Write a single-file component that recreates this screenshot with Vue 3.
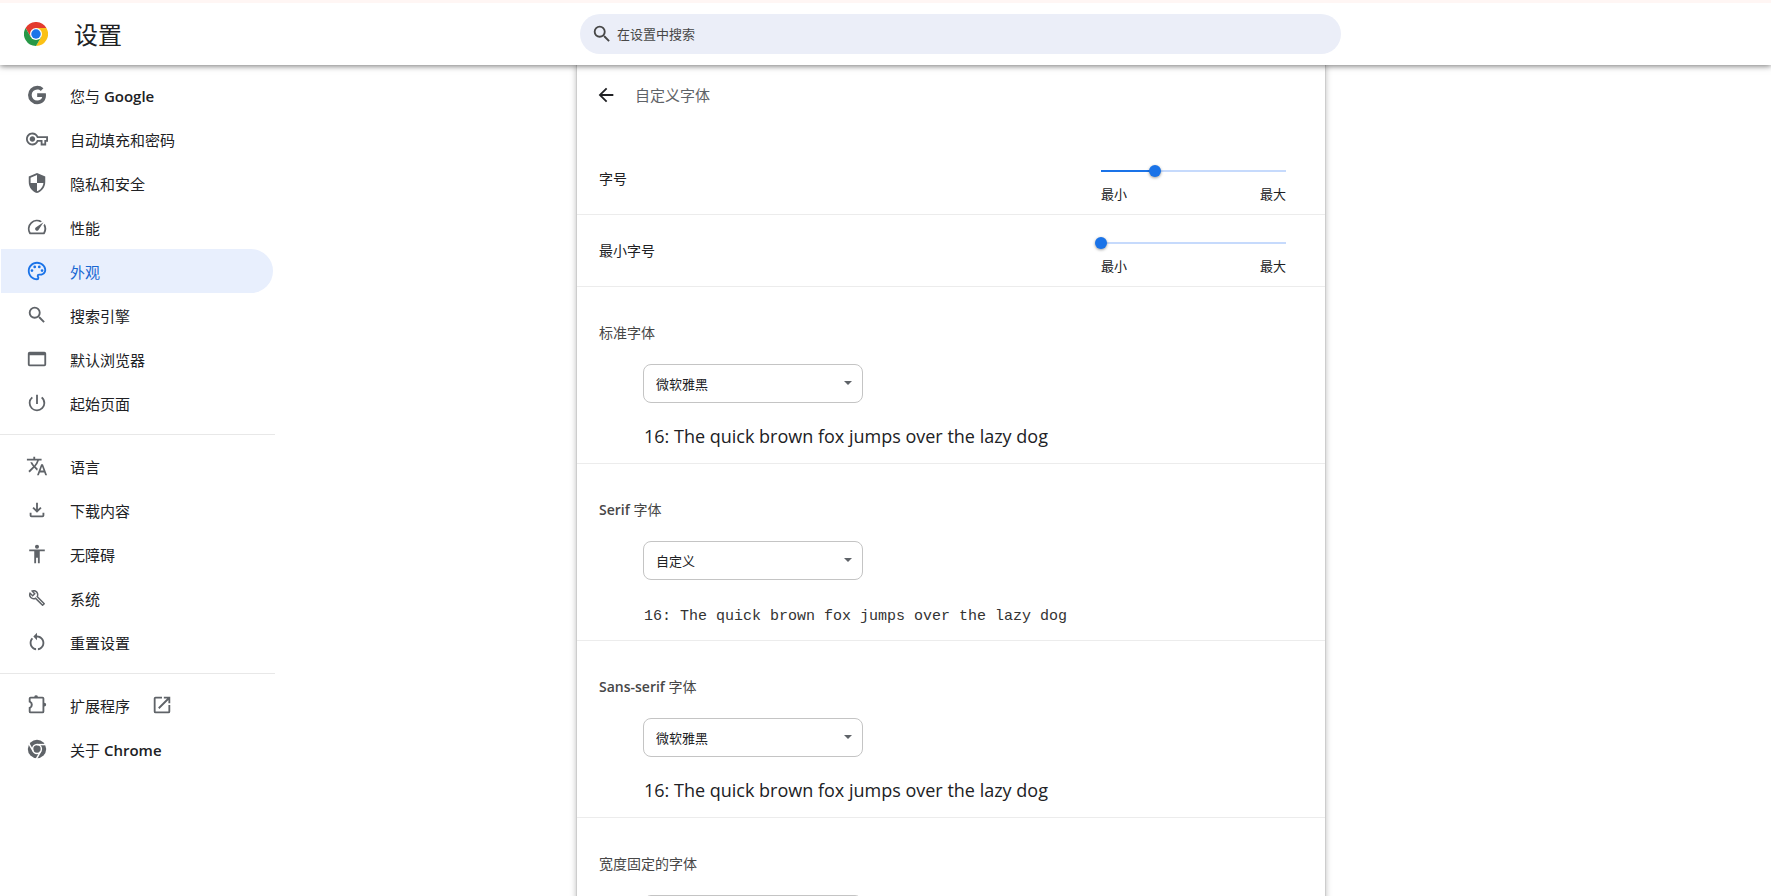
<script setup>
import { ref } from 'vue'

// Labels are lists of runs; Latin runs are drawn in semibold.
const groups = [
  [
    { label: ['您与 ', 'Google'], icon: 'google' },
    { label: ['自动填充和密码'], icon: 'key' },
    { label: ['隐私和安全'], icon: 'shield' },
    { label: ['性能'], icon: 'speed' },
    { label: ['外观'], icon: 'palette', active: true },
    { label: ['搜索引擎'], icon: 'search' },
    { label: ['默认浏览器'], icon: 'browser' },
    { label: ['起始页面'], icon: 'power' },
  ],
  [
    { label: ['语言'], icon: 'translate' },
    { label: ['下载内容'], icon: 'download' },
    { label: ['无障碍'], icon: 'accessibility' },
    { label: ['系统'], icon: 'wrench', box: '-3 -3 30 30' },
    { label: ['重置设置'], icon: 'reset' },
  ],
  [
    { label: ['扩展程序'], icon: 'extension', box: '-1 1 24 24', external: true },
    { label: ['关于 ', 'Chrome'], icon: 'chrome' },
  ],
]

const icons = {
  google: 'M12.2 10.2v3.9h5.5c-.5 2.3-2.4 3.9-5.5 3.9a6 6 0 1 1 0-12c1.5 0 2.9.5 3.9 1.5l2.9-2.9A9.9 9.9 0 0 0 12.2 2a10 10 0 1 0 0 20c5.8 0 9.6-4.1 9.6-9.8 0-.7-.1-1.400-.2-2z',
  key: 'M22 19h-6v-4h-2.680c-1.140 2.420-3.600 4-6.320 4-3.860 0-7-3.140-7-7s3.140-7 7-7c2.720 0 5.170 1.580 6.320 4H24v6h-2v4zm-4-2h2v-4h2v-2H11.940l-.23-.67C11.010 8.340 9.110 7 7 7c-2.760 0-5 2.240-5 5s2.240 5 5 5c2.110 0 4.010-1.340 4.710-3.330l.23-.67H18v4zM7 15c-1.650 0-3-1.350-3-3s1.350-3 3-3 3 1.350 3 3-1.350 3-3 3z',
  shield: 'M12 1 3 5v6c0 5.550 3.840 10.740 9 12 5.160-1.260 9-6.450 9-12V5l-9-4zm0 10.990h7c-.53 4.120-3.280 7.790-7 8.940V12H5V6.300l7-3.110v8.800z',
  speed: 'm20.380 8.570-1.230 1.850a8 8 0 0 1-.22 7.580H5.070A8 8 0 0 1 15.580 6.850l1.850-1.230A10 10 0 0 0 3.350 19a2 2 0 0 0 1.720 1h13.850a2 2 0 0 0 1.740-1 10 10 0 0 0-.27-10.440zm-9.790 6.840a2 2 0 0 0 2.830 0l5.660-8.490-8.490 5.660a2 2 0 0 0 0 2.830z',
  palette: 'M12 22C6.490 22 2 17.510 2 12S6.490 2 12 2s10 4.040 10 9c0 3.310-2.690 6-6 6h-1.770c-.28 0-.5.22-.5.5 0 .12.05.23.13.33.41.47.64 1.060.64 1.670A2.500 2.500 0 0 1 12 22zm0-18c-4.410 0-8 3.590-8 8s3.590 8 8 8c.28 0 .5-.22.5-.5a.54.54 0 0 0-.14-.35c-.41-.46-.63-1.050-.63-1.650a2.500 2.500 0 0 1 2.500-2.500H16c2.210 0 4-1.790 4-4 0-3.860-3.590-7-8-7zM6.500 10a1.500 1.500 0 1 0 0 3 1.500 1.500 0 0 0 0-3zm3-4a1.500 1.500 0 1 0 0 3 1.500 1.500 0 0 0 0-3zm5 0a1.500 1.500 0 1 0 0 3 1.500 1.500 0 0 0 0-3zm3 4a1.500 1.500 0 1 0 0 3 1.500 1.500 0 0 0 0-3z',
  search: 'M15.500 14h-.79l-.28-.27A6.471 6.471 0 0 0 16 9.500 6.500 6.500 0 1 0 9.500 16c1.610 0 3.090-.59 4.230-1.570l.27.28v.79l5 4.990L20.490 19l-4.990-5zm-6 0C7.010 14 5 11.990 5 9.500S7.010 5 9.500 5 14 7.010 14 9.500 11.990 14 9.500 14z',
  browser: 'M20 4H4a2 2 0 0 0-2 2v12a2 2 0 0 0 2 2h16a2 2 0 0 0 2-2V6a2 2 0 0 0-2-2zm0 14H4V8h16v10z',
  power: 'M13 3h-2v10h2V3zm4.830 2.170-1.420 1.420A6.920 6.920 0 0 1 19 12c0 3.870-3.130 7-7 7A6.995 6.995 0 0 1 7.580 6.580L6.170 5.170A8.932 8.932 0 0 0 3 12a9 9 0 0 0 18 0c0-2.740-1.230-5.180-3.170-6.830z',
  translate: 'm12.870 15.070-2.540-2.510.03-.03A17.520 17.520 0 0 0 14.070 6H17V4h-7V2H8v2H1v1.990h11.170C11.500 7.920 10.440 9.750 9 11.350 8.070 10.320 7.300 9.190 6.690 8h-2c.73 1.630 1.730 3.170 2.980 4.560l-5.090 5.020L4 19l5-5 3.110 3.110.76-2.040zM18.500 10h-2L12 22h2l1.120-3h4.750L21 22h2l-4.500-12zm-2.620 7 1.620-4.330L19.120 17h-3.240z',
  download: 'M11 4h2v7.200l2.600-2.600L17 10l-5 5-5-5 1.400-1.400 2.600 2.600V4zM4 15h2v3h12v-3h2v3a2 2 0 0 1-2 2H6a2 2 0 0 1-2-2v-3z',
  accessibility: 'M12 2a2.200 2.200 0 1 1 0 4.400A2.200 2.200 0 0 1 12 2zm8.500 7H15v13h-2v-6h-2v6H9V9H3.500V7h17v2z',
  wrench: 'M22.610 18.990l-9.080-9.080c.93-2.340.45-5.100-1.440-7C9.790.61 6.210.4 3.660 2.260L7.500 6.110 6.080 7.520 2.250 3.690C.39 6.230.6 9.820 2.900 12.110c1.860 1.860 4.570 2.350 6.890 1.480l9.110 9.110c.39.39 1.020.39 1.410 0l2.300-2.300c.4-.38.4-1.010 0-1.410zm-3 1.600l-9.460-9.460c-.61.45-1.290.72-2 .82-1.360.2-2.790-.21-3.830-1.250C3.370 9.760 2.930 8.500 3 7.260l3.090 3.090 4.240-4.240-3.090-3.090c1.240-.07 2.490.37 3.440 1.310 1.080 1.080 1.490 2.570 1.240 3.960-.12.71-.42 1.370-.88 1.960l9.450 9.450-.88.89z',
  reset: 'M12 5V2L8 6l4 4V7c3.310 0 6 2.690 6 6 0 2.970-2.170 5.430-5 5.910v2.020c3.950-.49 7-3.850 7-7.930 0-4.420-3.580-8-8-8zm-6 8c0-1.650.67-3.150 1.760-4.240L6.340 7.340C4.900 8.790 4 10.790 4 13c0 4.080 3.050 7.440 7 7.930v-2.020c-2.830-.48-5-2.940-5-5.910z',
  extension: 'M10 2.500a2 2 0 0 1 2 1.500h5a2 2 0 0 1 2 2v4.500a2 2 0 0 1 0 4V20a2 2 0 0 1-2 2H4a2 2 0 0 1-2-2v-4.500a2.800 2.800 0 0 0 0-5.500V6a2 2 0 0 1 2-2h4a2 2 0 0 1 2-1.500zM4 6v2.600a4.700 4.700 0 0 1 0 8.200V20h13V6H4z',
}

const sliders = ref([
  { id: 'font-size', label: '字号', value: 7, max: 24 },
  { id: 'min-font-size', label: '最小字号', value: 0, max: 24 },
])

const fonts = ref([
  { id: 'standard', label: ['标准字体'], value: '微软雅黑', sample: 'sans' },
  { id: 'serif', label: ['', 'Serif', ' 字体'], value: '自定义', sample: 'mono' },
  { id: 'sans-serif', label: ['', 'Sans-serif', ' 字体'], value: '微软雅黑', sample: 'sans' },
  { id: 'fixed', label: ['宽度固定的字体'], value: '自定义', sample: 'mono' },
])
const fontOptions = ['微软雅黑', '自定义']
</script>

<template>
  <div class="page">
    <header class="toolbar">
      <div class="brand">
        <svg class="logo" viewBox="0 0 48 48" aria-hidden="true">
          <path fill="#e33b2e" d="M3.200 12A24 24 0 0 1 44.800 12L24 13 13.600 30z" />
          <path fill="#fbc116" d="M44.800 12A24 24 0 0 1 24 48L34.400 30 24 12z" />
          <path fill="#279847" d="M24 48A24 24 0 0 1 3.200 12L13.600 30 34.400 30z" />
          <circle cx="24" cy="24" r="12" fill="#fff" />
          <circle cx="24" cy="24" r="9.500" fill="#1a73e8" />
        </svg>
        <h1>设置</h1>
      </div>
      <label class="search">
        <svg viewBox="0 0 24 24" aria-hidden="true"><path :d="icons.search" /></svg>
        <input type="search" placeholder="在设置中搜索" aria-label="在设置中搜索" />
      </label>
    </header>

    <div class="body">
      <nav class="sidebar">
        <ul v-for="(group, i) in groups" :key="i">
          <li v-for="item in group" :key="item.icon">
            <a href="#" :class="{ active: item.active }">
              <svg v-if="item.icon === 'chrome'" viewBox="0 0 24 24" aria-hidden="true">
                <circle cx="12" cy="12" r="10" />
                <g fill="none" stroke="#fff" stroke-width="1.600">
                  <circle cx="12" cy="12" r="4.800" />
                  <path d="M12 7.200h11" />
                  <path d="M12 7.200h11" transform="rotate(120 12 12)" />
                  <path d="M12 7.200h11" transform="rotate(240 12 12)" />
                </g>
              </svg>
              <svg v-else :viewBox="item.box || '0 0 24 24'" aria-hidden="true">
                <path fill-rule="evenodd" :d="icons[item.icon]" />
              </svg>
              <span>{{ item.label[0] }}<b v-if="item.label[1]">{{ item.label[1] }}</b></span>
              <svg v-if="item.external" class="external" viewBox="0 0 24 24" aria-hidden="true">
                <path d="M19 19H5V5h7V3H5a2 2 0 0 0-2 2v14a2 2 0 0 0 2 2h14a2 2 0 0 0 2-2v-7h-2v7zM14 3v2h3.590l-9.830 9.830 1.410 1.410L19 6.410V10h2V3h-7z" />
              </svg>
            </a>
          </li>
        </ul>
      </nav>

      <main class="card">
        <div class="subhead">
          <button type="button" aria-label="返回">
            <svg viewBox="0 0 24 24" aria-hidden="true"><path d="M20 11H7.830l5.590-5.590L12 4l-8 8 8 8 1.410-1.410L7.830 13H20v-2z" /></svg>
          </button>
          <h2>自定义字体</h2>
        </div>

        <div v-for="s in sliders" :key="s.id" class="slider-row">
          <label :for="s.id">{{ s.label }}</label>
          <div class="slider">
            <input
              :id="s.id"
              v-model.number="s.value"
              type="range"
              min="0"
              :max="s.max"
              :style="{ '--fill': (s.value / s.max) * 100 + '%' }"
            />
            <div class="legend"><span>最小</span><span>最大</span></div>
          </div>
        </div>

        <section v-for="f in fonts" :key="f.id" class="font">
          <label :for="f.id">{{ f.label[0] }}<b v-if="f.label[1]">{{ f.label[1] }}</b>{{ f.label[2] }}</label>
          <div class="select">
            <select :id="f.id" v-model="f.value">
              <option v-for="o in fontOptions" :key="o">{{ o }}</option>
            </select>
            <svg viewBox="0 0 8 4" aria-hidden="true"><path d="M0 0h8L4 4z" /></svg>
          </div>
          <p :class="f.sample">16: The quick brown fox jumps over the lazy dog</p>
        </section>
      </main>
    </div>
  </div>
</template>

<style>
body {
  background: #fff;
}
</style>

<style scoped>
.page {
  display: flex;
  flex-direction: column;
  height: 100vh;
  overflow: hidden;
  color: #202124;
  font-family: "Open Sans", "Noto Sans CJK SC", sans-serif;
  font-size: 15px;
}
h1,
h2,
p,
ul {
  margin: 0;
  padding: 0;
  font-weight: 400;
}
b {
  font-weight: 600;
}
li {
  list-style: none;
}
svg {
  display: block;
  flex: none;
  fill: currentColor;
}
.toolbar {
  position: relative;
  z-index: 1;
  display: grid;
  grid-template-columns: 580fr minmax(0, 761px) 430fr;
  align-items: center;
  height: 62px;
  flex: none;
  border-top: 3px solid #fff6f4;
  background: #fff;
  box-shadow: 0 1px 6px rgba(0, 0, 0, 0.55);
}
.brand {
  display: flex;
  align-items: center;
  gap: 26px;
  padding-left: 24px;
}
.logo {
  width: 24px;
  height: 24px;
}
h1 {
  padding-top: 2px;
  font-size: 24px;
  line-height: 32px;
}
.search {
  display: flex;
  align-items: center;
  gap: 4px;
  height: 40px;
  padding: 0 16px 0 11px;
  border-radius: 20px;
  background: #ebeef8;
  color: #474747;
}
.search svg {
  width: 22px;
  height: 22px;
}
.search input {
  flex: 1;
  min-width: 0;
  padding: 0;
  border: 0;
  outline: 0;
  background: none;
  font: inherit;
  font-size: 13px;
}
.search input::placeholder {
  color: #474747;
}
.body {
  display: grid;
  grid-template-columns: 577fr minmax(0, 748px) 446fr;
  flex: 1;
  min-height: 0;
}
.sidebar {
  width: 275px;
  padding-top: 8px;
}
.sidebar ul + ul {
  margin-top: 9px;
  padding-top: 9px;
  border-top: 1px solid #e8e8e8;
}
.sidebar a {
  display: flex;
  align-items: center;
  height: 44px;
  margin: 0 2px 0 1px;
  padding-left: 25px;
  border-radius: 0 22px 22px 0;
  color: #202124;
  text-decoration: none;
}
.sidebar svg {
  width: 22px;
  height: 22px;
  margin-right: 22px;
  color: #5f6368;
}
.sidebar .external {
  margin: 0 0 0 21px;
}
.sidebar .active {
  background: #e8effd;
  color: #1967d2;
}
.sidebar .active svg {
  color: #1a73e8;
}
.card {
  align-self: start;
  box-shadow: 0 0 0 1px #cdcdcd, 0 0 6px 1px rgba(0, 0, 0, 0.25);
}
.subhead {
  display: flex;
  align-items: center;
  gap: 18px;
  height: 60px;
  padding: 0 18px;
  color: #5f6368;
}
.subhead button {
  padding: 0;
  border: 0;
  background: none;
  color: #202124;
}
.subhead svg {
  width: 22px;
  height: 22px;
}
h2 {
  padding-bottom: 2px;
  font-size: 15px;
}
.slider-row {
  display: flex;
  align-items: center;
  justify-content: space-between;
  box-sizing: border-box;
  height: 72px;
  padding: 0 39px 2px 22px;
  border-bottom: 1px solid #ececec;
  font-size: 14px;
}
.subhead + .slider-row {
  margin-top: 18px;
}
.slider {
  width: 185px;
  padding-top: 14px;
}
.slider input {
  display: block;
  width: calc(100% + 12px);
  height: 12px;
  margin: 0 -6px;
  appearance: none;
  background: linear-gradient(to right, #1a73e8 var(--fill), #c6dafc var(--fill)) center / calc(100% - 12px) 2px no-repeat;
}
.slider input::-webkit-slider-thumb {
  width: 12px;
  height: 12px;
  appearance: none;
  border-radius: 50%;
  background: #1a73e8;
  box-shadow: 0 1px 3px rgba(0, 0, 0, 0.4);
}
.legend {
  display: flex;
  justify-content: space-between;
  margin-top: 7px;
  font-size: 13px;
  line-height: 20px;
}
.font {
  box-sizing: border-box;
  min-height: 177px;
  padding: 36px 22px 11px;
  border-bottom: 1px solid #ececec;
}
.font label {
  display: block;
  color: #474747;
  font-size: 14px;
  line-height: 20px;
}
.select {
  position: relative;
  width: 220px;
  margin: 21px 0 0 44px;
}
select {
  display: block;
  width: 100%;
  height: 39px;
  padding: 0 32px 0 12px;
  appearance: none;
  border: 1px solid #c4c4c4;
  border-radius: 8px;
  background: #fff;
  color: #202124;
  font: inherit;
  font-size: 13px;
}
.select svg {
  position: absolute;
  top: 17px;
  right: 11px;
  width: 8px;
  height: 4px;
  color: #5f6368;
  pointer-events: none;
}
.font p {
  margin: 21px 0 0 45px;
  font-size: 18px;
  line-height: 24px;
}
.font .mono {
  margin-top: 25px;
  color: #333;
  font-family: "Liberation Mono", monospace;
  font-size: 15px;
}
</style>
